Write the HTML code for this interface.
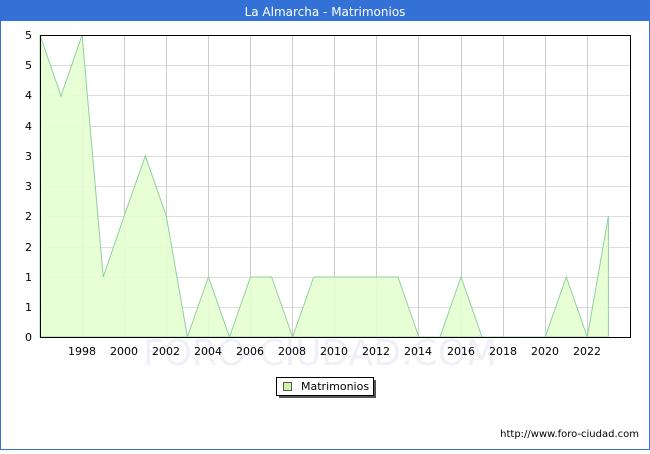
<!DOCTYPE html><html><head><style>
body{margin:0;width:650px;height:450px;overflow:hidden;font-family:"DejaVu Sans","Liberation Sans",sans-serif;}
</style></head><body>
<svg width="650" height="450" xmlns="http://www.w3.org/2000/svg" font-family="DejaVu Sans, Liberation Sans, sans-serif">
<rect x="0" y="0" width="650" height="450" fill="#3371d6"/>
<rect x="1" y="21" width="648" height="428" fill="#fff"/>
<text x="325" y="16" fill="#fff" font-size="12" text-anchor="middle">La Almarcha - Matrimonios</text>
<g stroke="#dcdcdc" stroke-width="1">
<line x1="40" y1="65.5" x2="630" y2="65.5"/><line x1="40" y1="95.5" x2="630" y2="95.5"/><line x1="40" y1="126.5" x2="630" y2="126.5"/><line x1="40" y1="156.5" x2="630" y2="156.5"/><line x1="40" y1="186.5" x2="630" y2="186.5"/><line x1="40" y1="216.5" x2="630" y2="216.5"/><line x1="40" y1="247.5" x2="630" y2="247.5"/><line x1="40" y1="277.5" x2="630" y2="277.5"/><line x1="40" y1="307.5" x2="630" y2="307.5"/>
</g>
<g stroke="#cccccc" stroke-width="1">
<line x1="82.5" y1="35" x2="82.5" y2="337"/><line x1="124.5" y1="35" x2="124.5" y2="337"/><line x1="166.5" y1="35" x2="166.5" y2="337"/><line x1="208.5" y1="35" x2="208.5" y2="337"/><line x1="250.5" y1="35" x2="250.5" y2="337"/><line x1="292.5" y1="35" x2="292.5" y2="337"/><line x1="334.5" y1="35" x2="334.5" y2="337"/><line x1="376.5" y1="35" x2="376.5" y2="337"/><line x1="418.5" y1="35" x2="418.5" y2="337"/><line x1="461.5" y1="35" x2="461.5" y2="337"/><line x1="503.5" y1="35" x2="503.5" y2="337"/><line x1="545.5" y1="35" x2="545.5" y2="337"/><line x1="587.5" y1="35" x2="587.5" y2="337"/>
</g>
<text x="320" y="365" font-size="36" fill="#f0f0f8" text-anchor="middle">FORO-CIUDAD.COM</text>
<polygon fill="#e6ffd0" fill-opacity="0.9" stroke="#8fcf9f" stroke-width="1" points="40,337 40,35 61,96 82.1,35 103.2,277 124.2,216 145.3,156 166.3,216 187.4,337 208.4,277 229.5,337 250.5,277 271.6,277 292.6,337 313.7,277 334.7,277 355.8,277 376.8,277 397.9,277 418.9,337 440,337 461,277 482,337 503.1,337 524.2,337 545.2,337 566.3,277 587.3,337 608.4,216 608.4,337"/>
<rect x="40.5" y="35.5" width="590" height="302" fill="none" stroke="#000" stroke-width="1"/>
<g font-size="11" fill="#000" text-anchor="end">
<text x="32" y="39">5</text><text x="32" y="69">5</text><text x="32" y="99">4</text><text x="32" y="130">4</text><text x="32" y="160">3</text><text x="32" y="190">3</text><text x="32" y="220">2</text><text x="32" y="251">2</text><text x="32" y="281">1</text><text x="32" y="311">1</text><text x="32" y="341">0</text>
</g>
<g font-size="11" fill="#000" text-anchor="middle">
<text x="82" y="355">1998</text><text x="124" y="355">2000</text><text x="166" y="355">2002</text><text x="208" y="355">2004</text><text x="250" y="355">2006</text><text x="292" y="355">2008</text><text x="334" y="355">2010</text><text x="376" y="355">2012</text><text x="418" y="355">2014</text><text x="461" y="355">2016</text><text x="503" y="355">2018</text><text x="545" y="355">2020</text><text x="587" y="355">2022</text>
</g>
<rect x="279" y="380" width="97" height="18" fill="#555"/>
<rect x="276.5" y="377.5" width="97" height="18" fill="#fff" stroke="#000"/>
<rect x="283.5" y="382.5" width="8" height="8" fill="#d0f5a8" stroke="#555"/>
<text x="301" y="390" font-size="11">Matrimonios</text>
<text x="639" y="437" font-size="10" text-anchor="end">http://www.foro-ciudad.com</text>
</svg>
</body></html>
